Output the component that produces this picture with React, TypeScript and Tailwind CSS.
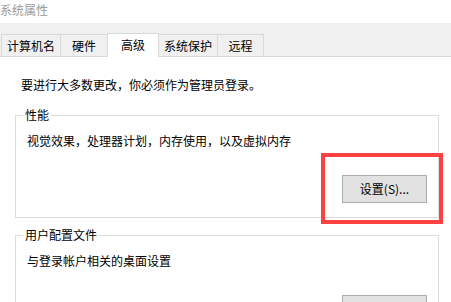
import React from 'react';

const font = { fontFamily: '"Noto Sans CJK SC", "Microsoft YaHei UI", sans-serif' };

const tabs = [
  { label: '计算机名', cls: 'w-[60px]' },
  { label: '硬件', cls: 'w-[48px]' },
  { label: '高级', cls: 'w-[52px]', active: true },
  { label: '系统保护', cls: 'w-[60px]' },
  { label: '远程', cls: 'w-[47px]' },
];

interface GroupBoxProps {
  title: string;
  text: string;
  button: string;
  className?: string;
}

const GroupBox: React.FC<GroupBoxProps> = ({ title, text, button, className }) => (
  <div className={`relative w-[424px] h-[103px] border border-[#dcdcdc] flex flex-col ${className ?? ''}`}>
    <span className="absolute -top-[9px] left-[7px] bg-white px-[2px] leading-[16px]">{title}</span>
    <div className="pt-[17px] pl-[11px] leading-[16px]">{text}</div>
    <div className="flex justify-end pr-[11px] mt-[26px]">
      <button className="w-[85px] h-[28px] border border-[#adadad] bg-[#e1e1e1] text-[12px] leading-[16px] text-black">
        {button}
      </button>
    </div>
  </div>
);

export default function App() {
  return (
    <div className="relative w-[451px] h-[302px] overflow-hidden bg-white text-[12px] text-black" style={font}>
      {/* title bar */}
      <div className="h-[23px] leading-[20px] text-[#9a9a9a]">系统属性</div>

      {/* tab strip */}
      <div className="h-[34px] bg-[#f0f0f0] border-b border-[#d9d9d9] flex items-end pl-[1px]">
        {tabs.map((t, i) =>
          t.active ? (
            <div
              key={t.label}
              className={`${t.cls} h-[24px] -mb-px bg-white border border-b-0 border-[#d9d9d9] flex items-center justify-center pb-[2px] relative z-10 ${i > 0 ? '-ml-px' : ''}`}
            >
              {t.label}
            </div>
          ) : (
            <div
              key={t.label}
              className={`${t.cls} h-[22px] border border-b-0 border-[#d9d9d9] flex items-center justify-center ${i > 0 ? '-ml-px' : ''}`}
            >
              {t.label}
            </div>
          )
        )}
      </div>

      {/* page */}
      <div className="pt-[20px]">
        <div className="pl-[21px] leading-[16px]">要进行大多数更改，你必须作为管理员登录。</div>
        <div className="pl-[15px] mt-[22px] flex flex-col">
          <GroupBox title="性能" text="视觉效果，处理器计划，内存使用，以及虚拟内存" button="设置(S)..." />
          <GroupBox title="用户配置文件" text="与登录帐户相关的桌面设置" button="设置(E)..." className="mt-[17px]" />
        </div>
      </div>

      {/* red highlight annotation */}
      <div className="absolute left-[321px] top-[153px] w-[122px] h-[71px] border-4 border-[#fe4242]" />
    </div>
  );
}
